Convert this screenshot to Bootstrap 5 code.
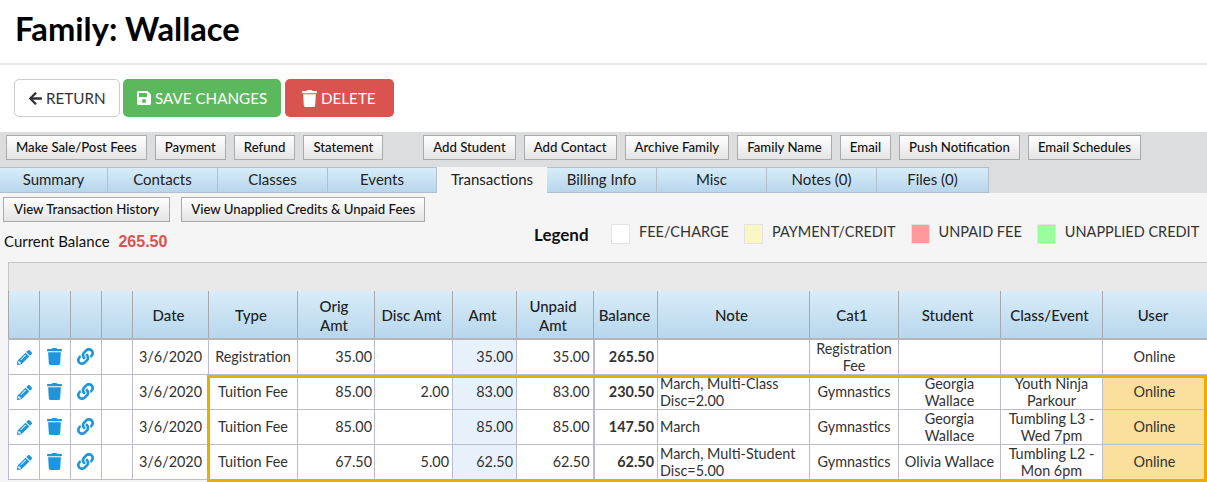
<!DOCTYPE html>
<html lang="en">
<head>
<meta charset="utf-8">
<title>Family: Wallace</title>
<link href="https://cdn.jsdelivr.net/npm/bootstrap@5.3.0/dist/css/bootstrap.min.css" rel="stylesheet">
<style>
html,body{height:482px;overflow:hidden}
body{font-family:"Lato","Liberation Sans",sans-serif;font-size:15px;color:#333;background:#fff;position:relative}
.title-bar{height:65px;border-bottom:2px solid #e7e7e7;padding-left:15px;padding-top:9px}
.title-bar h1{font-family:"Lato",sans-serif;font-size:32.7px;font-weight:700;line-height:40px;color:#000;margin:0}
.action-bar{height:67px;padding:14px 14px 0;gap:3px}
.action-btn{height:38px;font-size:15.2px;line-height:20px;padding:0 14px;border-radius:5px;display:inline-flex;align-items:center;gap:4px;color:#fff;border:1px solid transparent;white-space:nowrap}
.action-back{background:#fff;border-color:#ccc;color:#333;width:106px}
.action-save{background:#5cb85c;width:158px;padding-left:13px}
.action-del{background:#d9534f;width:109px;margin-left:1px;padding-left:16px}
.action-btn svg{fill:currentColor;flex:none}
.ic-arrow{width:13px;height:15px}
.ic-save{width:14px;height:16px}
.ic-del{width:15px;height:17px}
.tool-strip{background:#dcdddf;height:61px}
.tool-row{height:35px;padding:3px 0 0 6px;gap:8px}
.tool-btn{height:25px;font-size:13.2px;line-height:23px;padding:0 9px;border:1px solid #aaa;border-radius:0;background:linear-gradient(#fff,#e4e4e4);color:#111;font-weight:500;white-space:nowrap}
.tool-gap{margin-left:32px}
.tool-wide{padding:0 10px}
.tab-row{height:26px;margin:0;padding:0;list-style:none;border:0;flex-wrap:nowrap}
.tab-row .nav-link{width:110px;height:26px;padding:0;line-height:23px;text-align:center;color:#222;font-size:15px;border:1px solid #b2bfcd;border-left:0;border-radius:0;background:linear-gradient(#d8edf9,#b8d6ec)}
.tab-row .nav-item:first-child .nav-link{width:108px}
.tab-row .nav-item:nth-child(4) .nav-link{width:109px}
.tab-row .nav-item:last-child .nav-link{width:112px}
.tab-row .nav-link.active{background:#f5f5f5;border:0;color:#222;line-height:25px}
.pane{background:#f5f5f5;height:289px;position:relative;overflow:hidden}
.view-row{padding:4px 0 0 3px;gap:11px;height:32px}
.info-row{height:38px;margin-top:-1px}
.balance{flex:none;padding:7px 0 0 4px;font-size:15px;line-height:20px;color:#111;width:534px}
.balance b{color:#d9534f;font-weight:700;font-family:"Liberation Sans",sans-serif;margin-left:5px;font-size:16px}
.legend-title{flex:none;font-weight:700;font-size:17px;line-height:20px;color:#111;width:77px;padding-top:1px}
.legend-item{flex:none;display:flex;align-items:flex-start;font-size:14.5px;line-height:16px;color:#333;margin-right:15px;white-space:nowrap}
.swatch{width:19px;height:20px;border:1px solid #e3e3e3;margin-right:9px;background:#fff}
.sw-pay{background:#f9f7c4}.sw-unpaid{background:#ff9a9a}.sw-credit{background:#9cfd9c}
.tx-wrap{margin-left:8px;width:1199px;overflow:hidden}
.tx-band{height:29px;background:#e9e9e9;border-top:1px solid #c6c6c6;border-left:1px solid #c6c6c6}
.tx-table{table-layout:fixed;width:1199px;margin:0;border-collapse:collapse;--bs-table-bg:transparent;--bs-table-color:#333}
.tx-table th,.tx-table td{border:1px solid #bdbbcf;padding:0 3px 1px;font-size:14.4px;line-height:17px;vertical-align:middle;text-align:center;overflow:hidden}
.tx-table td{background:#fff;height:35px;color:#333;font-weight:400}
.tx-table td.tight{padding:0 3px}
.tx-table td:nth-child(7){padding-right:2px}
.tx-table th{height:48px;background:linear-gradient(#d8edf9,#b8d6ec);color:#222;font-weight:500;line-height:19px;font-size:15px;border-color:#a6a8ad;border-top:0;border-bottom:2px solid #b5b5b9;padding:2px 6px 0 2px}
.tx-table th:nth-child(11){padding-right:4px}
.tx-table .num{text-align:right}
.tx-table .amt{background:#e8f2fc}
.tx-table .bal{font-weight:700;border-left:2px solid #bdbbcf}
.tx-table td.note,.tx-table td.note.tight{text-align:left;padding-left:2px}
.tx-table .usr{background:#fbdf9d}
.tx-table .who{padding:0 3px 1px 2px}
.tx-table td.ico{padding:0 0 2px}
.tx-table td.ico-b{padding:0 2px 2px 0}
.tx-table td.ico svg{fill:#1f95dc;display:inline-block;vertical-align:middle}
.ic-pen{width:15px;height:15px}
.ic-bin{width:15px;height:17px}
.ic-link{width:17px;height:17px}
.hilite{position:absolute;left:207px;top:375px;width:1000px;height:107px;border:3px solid #f0ab00;pointer-events:none}
</style>
</head>
<body>
<svg width="0" height="0" class="position-absolute">
<symbol id="i-arrow" viewBox="0 0 448 512"><path d="M257.5 445.1l-22.2 22.2c-9.4 9.4-24.6 9.4-33.9 0L7 273c-9.4-9.4-9.4-24.6 0-33.9L201.4 44.7c9.4-9.4 24.6-9.4 33.9 0l22.2 22.2c9.5 9.5 9.3 25-.4 34.3L136.6 216H424c13.3 0 24 10.7 24 24v32c0 13.3-10.7 24-24 24H136.6l120.5 114.8c9.8 9.3 10 24.8.4 34.3z"/></symbol>
<symbol id="i-save" viewBox="0 0 448 512"><path d="M433.941 129.941l-83.882-83.882A48 48 0 0 0 316.118 32H48C21.49 32 0 53.49 0 80v352c0 26.51 21.49 48 48 48h352c26.51 0 48-21.49 48-48V163.882a48 48 0 0 0-14.059-33.941zM224 416c-35.346 0-64-28.654-64-64 0-35.346 28.654-64 64-64s64 28.654 64 64c0 35.346-28.654 64-64 64zm96-304.52V212c0 6.627-5.373 12-12 12H76c-6.627 0-12-5.373-12-12V108c0-6.627 5.373-12 12-12h228.52c3.183 0 6.235 1.264 8.485 3.515l3.48 3.48A11.996 11.996 0 0 1 320 111.48z"/></symbol>
<symbol id="i-trash" viewBox="0 0 448 512"><path d="M432 32H312l-9.4-18.7A24 24 0 0 0 281.1 0H166.8a23.72 23.72 0 0 0-21.4 13.3L136 32H16A16 16 0 0 0 0 48v32a16 16 0 0 0 16 16h416a16 16 0 0 0 16-16V48a16 16 0 0 0-16-16zM53.2 467a48 48 0 0 0 47.9 45h245.8a48 48 0 0 0 47.9-45L416 128H32z"/></symbol>
<symbol id="i-pencil" viewBox="0 0 512 512"><path fill-rule="evenodd" d="M497.9 142.1l-46.1 46.1c-4.7 4.7-12.3 4.7-17 0l-111-111c-4.7-4.7-4.7-12.3 0-17l46.1-46.1c18.7-18.7 49.1-18.7 67.9 0l60.1 60.1c18.8 18.7 18.8 49.1 0 67.9zM284.2 99.8L21.6 362.4.4 483.9c-2.9 16.4 11.4 30.6 27.8 27.8l121.5-21.3 262.6-262.6c4.7-4.7 4.7-12.3 0-17l-111-111c-4.8-4.7-12.4-4.7-17.1 0zM124.1 339.9c-5.5-5.5-5.5-14.3 0-19.8l154-154c5.5-5.5 14.3-5.5 19.8 0s5.5 14.3 0 19.8l-154 154c-5.5 5.5-14.3 5.5-19.8 0zM88 424h48v36.3l-64.5 11.3-31.1-31.1L51.7 376H88v48z"/></symbol>
<symbol id="i-link" viewBox="0 0 512 512"><path d="M326.612 185.391c59.747 59.809 58.927 155.698.36 214.59-.11.12-.24.25-.36.37l-67.2 67.2c-59.27 59.27-155.699 59.262-214.96 0-59.27-59.26-59.27-155.7 0-214.96l37.106-37.106c9.84-9.84 26.786-3.3 27.294 10.606.648 17.722 3.826 35.527 9.69 52.721 1.986 5.822.567 12.262-3.783 16.612l-13.087 13.087c-28.026 28.026-28.905 73.66-1.155 101.96 28.024 28.579 74.086 28.749 102.325.51l67.2-67.19c28.191-28.191 28.073-73.757 0-101.83-3.701-3.694-7.429-6.564-10.341-8.569a16.037 16.037 0 0 1-6.947-12.606c-.396-10.567 3.348-21.456 11.698-29.806l21.054-21.055c5.521-5.521 14.182-6.199 20.584-1.731a152.482 152.482 0 0 1 20.522 17.197zM467.547 44.449c-59.261-59.262-155.69-59.27-214.96 0l-67.2 67.2c-.12.12-.25.25-.36.37-58.566 58.892-59.387 154.781.36 214.59a152.454 152.454 0 0 0 20.521 17.196c6.402 4.468 15.064 3.789 20.584-1.731l21.054-21.055c8.35-8.35 12.094-19.239 11.698-29.806a16.037 16.037 0 0 0-6.947-12.606c-2.912-2.005-6.64-4.875-10.341-8.569-28.073-28.073-28.191-73.639 0-101.83l67.2-67.19c28.239-28.239 74.3-28.069 102.325.51 27.75 28.3 26.872 73.934-1.155 101.96l-13.087 13.087c-4.35 4.35-5.769 10.79-3.783 16.612 5.864 17.194 9.042 34.999 9.69 52.721.509 13.906 17.454 20.446 27.294 10.606l37.106-37.106c59.271-59.259 59.271-155.699.001-214.959z"/></symbol>
</svg>

<div class="title-bar"><h1>Family: Wallace</h1></div>

<div class="action-bar d-flex align-items-start">
  <button type="button" class="btn action-btn action-back"><svg class="ic-arrow" viewBox="0 0 448 512"><use href="#i-arrow"/></svg>RETURN</button>
  <button type="button" class="btn action-btn action-save"><svg class="ic-save" viewBox="0 0 448 512"><use href="#i-save"/></svg>SAVE CHANGES</button>
  <button type="button" class="btn action-btn action-del"><svg class="ic-del" viewBox="0 0 448 512"><use href="#i-trash"/></svg>DELETE</button>
</div>

<div class="tool-strip">
  <div class="tool-row d-flex align-items-start">
    <button type="button" class="tool-btn">Make Sale/Post Fees</button>
    <button type="button" class="tool-btn">Payment</button>
    <button type="button" class="tool-btn">Refund</button>
    <button type="button" class="tool-btn">Statement</button>
    <button type="button" class="tool-btn tool-gap">Add Student</button>
    <button type="button" class="tool-btn">Add Contact</button>
    <button type="button" class="tool-btn">Archive Family</button>
    <button type="button" class="tool-btn">Family Name</button>
    <button type="button" class="tool-btn">Email</button>
    <button type="button" class="tool-btn">Push Notification</button>
    <button type="button" class="tool-btn">Email Schedules</button>
  </div>
  <ul class="nav tab-row">
    <li class="nav-item"><a class="nav-link" href="#">Summary</a></li>
    <li class="nav-item"><a class="nav-link" href="#">Contacts</a></li>
    <li class="nav-item"><a class="nav-link" href="#">Classes</a></li>
    <li class="nav-item"><a class="nav-link" href="#">Events</a></li>
    <li class="nav-item"><a class="nav-link active" href="#">Transactions</a></li>
    <li class="nav-item"><a class="nav-link" href="#">Billing Info</a></li>
    <li class="nav-item"><a class="nav-link" href="#">Misc</a></li>
    <li class="nav-item"><a class="nav-link" href="#">Notes (0)</a></li>
    <li class="nav-item"><a class="nav-link" href="#">Files (0)</a></li>
  </ul>
</div>

<div class="pane">
  <div class="view-row d-flex align-items-start">
    <button type="button" class="tool-btn tool-wide">View Transaction History</button>
    <button type="button" class="tool-btn">View Unapplied Credits &amp; Unpaid Fees</button>
  </div>
  <div class="info-row d-flex align-items-start">
    <div class="balance">Current Balance <b>265.50</b></div>
    <div class="legend-title">Legend</div>
    <div class="legend-item"><span class="swatch"></span>FEE/CHARGE</div>
    <div class="legend-item"><span class="swatch sw-pay"></span>PAYMENT/CREDIT</div>
    <div class="legend-item"><span class="swatch sw-unpaid"></span>UNPAID FEE</div>
    <div class="legend-item"><span class="swatch sw-credit"></span>UNAPPLIED CREDIT</div>
  </div>
  <div class="tx-wrap">
    <div class="tx-band"></div>
    <table class="table tx-table">
      <colgroup>
        <col style="width:31px"><col style="width:31px"><col style="width:31px"><col style="width:31px">
        <col style="width:76px"><col style="width:89px"><col style="width:77px"><col style="width:78px">
        <col style="width:64px"><col style="width:77px"><col style="width:64px"><col style="width:152px">
        <col style="width:89px"><col style="width:102px"><col style="width:102px"><col style="width:105px">
      </colgroup>
      <thead>
        <tr><th></th><th></th><th></th><th></th><th>Date</th><th>Type</th><th>Orig<br>Amt</th><th>Disc Amt</th><th>Amt</th><th>Unpaid<br>Amt</th><th>Balance</th><th>Note</th><th>Cat1</th><th>Student</th><th>Class/Event</th><th>User</th></tr>
      </thead>
      <tbody>
        <tr>
          <td class="ico"><svg class="ic-pen" viewBox="0 0 512 512"><use href="#i-pencil"/></svg></td><td class="ico ico-b"><svg class="ic-bin" viewBox="0 0 448 512"><use href="#i-trash"/></svg></td><td class="ico ico-b"><svg class="ic-link" viewBox="0 0 512 512"><use href="#i-link"/></svg></td><td></td>
          <td>3/6/2020</td><td>Registration</td><td class="num">35.00</td><td class="num"></td><td class="num amt">35.00</td><td class="num">35.00</td><td class="num bal">265.50</td><td class="note"></td><td class="tight">Registration Fee</td><td></td><td></td><td class="who">Online</td>
        </tr>
        <tr>
          <td class="ico"><svg class="ic-pen" viewBox="0 0 512 512"><use href="#i-pencil"/></svg></td><td class="ico ico-b"><svg class="ic-bin" viewBox="0 0 448 512"><use href="#i-trash"/></svg></td><td class="ico ico-b"><svg class="ic-link" viewBox="0 0 512 512"><use href="#i-link"/></svg></td><td></td>
          <td>3/6/2020</td><td>Tuition Fee</td><td class="num">85.00</td><td class="num">2.00</td><td class="num amt">83.00</td><td class="num">83.00</td><td class="num bal">230.50</td><td class="note tight">March, Multi-Class Disc=2.00</td><td>Gymnastics</td><td class="tight">Georgia Wallace</td><td class="tight">Youth Ninja Parkour</td><td class="usr who">Online</td>
        </tr>
        <tr>
          <td class="ico"><svg class="ic-pen" viewBox="0 0 512 512"><use href="#i-pencil"/></svg></td><td class="ico ico-b"><svg class="ic-bin" viewBox="0 0 448 512"><use href="#i-trash"/></svg></td><td class="ico ico-b"><svg class="ic-link" viewBox="0 0 512 512"><use href="#i-link"/></svg></td><td></td>
          <td>3/6/2020</td><td>Tuition Fee</td><td class="num">85.00</td><td class="num"></td><td class="num amt">85.00</td><td class="num">85.00</td><td class="num bal">147.50</td><td class="note">March</td><td>Gymnastics</td><td class="tight">Georgia<br>Wallace</td><td class="tight">Tumbling L3 - Wed 7pm</td><td class="usr who">Online</td>
        </tr>
        <tr>
          <td class="ico"><svg class="ic-pen" viewBox="0 0 512 512"><use href="#i-pencil"/></svg></td><td class="ico ico-b"><svg class="ic-bin" viewBox="0 0 448 512"><use href="#i-trash"/></svg></td><td class="ico ico-b"><svg class="ic-link" viewBox="0 0 512 512"><use href="#i-link"/></svg></td><td></td>
          <td>3/6/2020</td><td>Tuition Fee</td><td class="num">67.50</td><td class="num">5.00</td><td class="num amt">62.50</td><td class="num">62.50</td><td class="num bal">62.50</td><td class="note tight">March, Multi-Student Disc=5.00</td><td>Gymnastics</td><td>Olivia Wallace</td><td class="tight">Tumbling L2 - Mon 6pm</td><td class="usr who">Online</td>
        </tr>
      </tbody>
    </table>
  </div>
</div>
<div class="hilite"></div>
<script src="https://cdn.jsdelivr.net/npm/bootstrap@5.3.0/dist/js/bootstrap.bundle.min.js"></script>
</body>
</html>
